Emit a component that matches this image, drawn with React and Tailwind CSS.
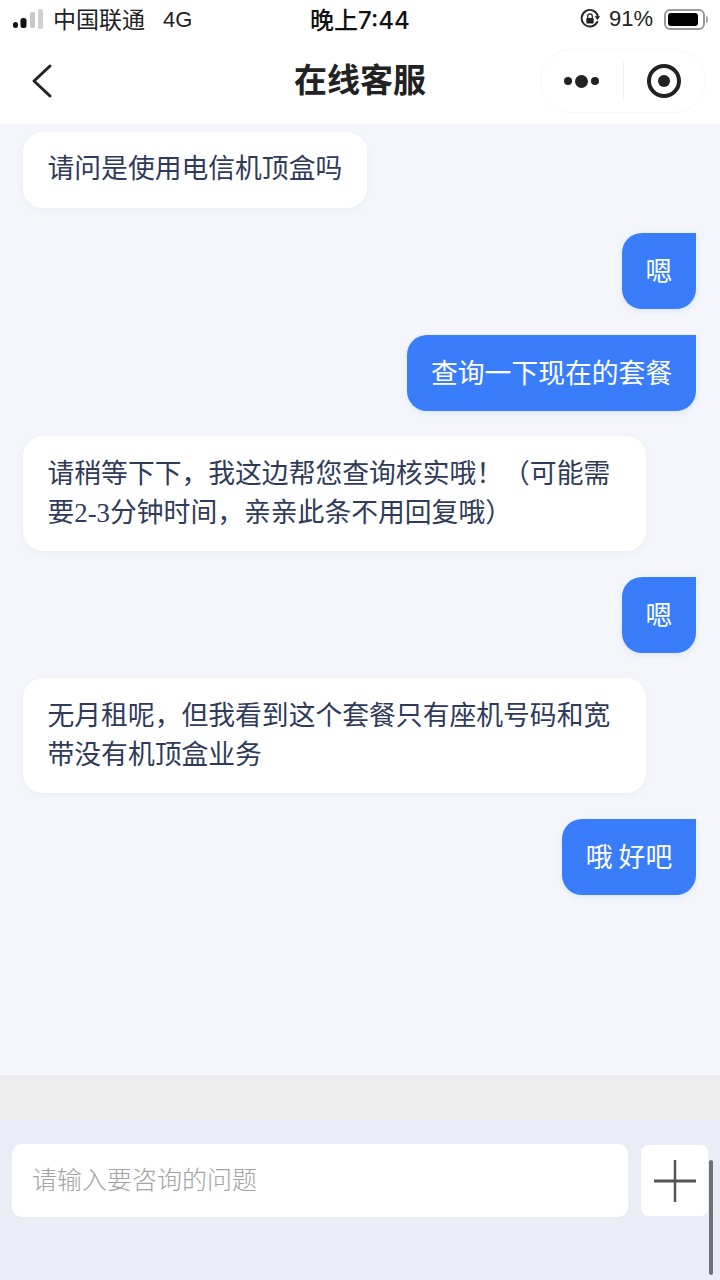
const cjk = "font-['Noto_Sans_CJK_SC','Noto_Sans',sans-serif]";

function Signal() {
  return (
    <svg width="32" height="22" viewBox="0 0 32 22">
      <rect x="0" y="14" width="5" height="6" rx="2.5" fill="#111" />
      <rect x="7.5" y="10" width="6" height="10" rx="2.5" fill="#111" />
      <rect x="17" y="4" width="5" height="16" rx="2" fill="#c8c8c8" />
      <rect x="25" y="1" width="5" height="20" rx="2" fill="#d0d0d0" />
    </svg>
  );
}

function StatusBar() {
  return (
    <div className="h-[44px] flex items-center pl-[13px] pr-[12px] pb-[6px] text-[#222]">
      <div className="flex items-center w-[297px]">
        <Signal />
        <span className="ml-[8px] -mt-[2px] text-[23px] leading-none">中国联通</span>
        <span className="ml-[18px] mt-[2px] text-[22px] leading-none font-['Liberation_Sans',sans-serif]">4G</span>
      </div>
      <div className="mt-[1px] text-[24px] leading-none font-medium text-[#111]">
        晚上<span className="font-['Inter',sans-serif]">7:44</span>
      </div>
      <div className="flex items-center ml-auto">
        <svg width="22" height="22" viewBox="0 0 24 24" fill="none">
          <path d="M20 15a9 9 0 1 1 .6-6" stroke="#222" strokeWidth="2" strokeLinecap="round" />
          <path d="M23 9l-3 4-3-4z" fill="#222" />
          <rect x="8" y="11" width="8" height="6" rx="1" fill="#222" />
          <path d="M9.5 11V9a2.5 2.5 0 0 1 5 0v2" stroke="#222" strokeWidth="1.4" />
        </svg>
        <span className="ml-[8px] text-[22px] leading-none font-['Liberation_Sans',sans-serif]">91%</span>
        <div className="ml-[11px] w-[41px] h-[21px] rounded-[6px] border-2 border-[#9a9a9a] p-[2px]">
          <div className="w-[90%] h-full rounded-[3px] bg-black" />
        </div>
        <div className="ml-[1px] w-[2px] h-[7px] rounded-r bg-[#aaa]" />
      </div>
    </div>
  );
}

function Header() {
  return (
    <div className="relative h-[80px] flex items-center pl-[30px] pr-[14px] pb-[6px] justify-between">
      <svg width="24" height="36" viewBox="0 0 24 36" fill="none">
        <path d="M20 3L4 18l16 15" stroke="#222" strokeWidth="3" strokeLinecap="round" strokeLinejoin="round" />
      </svg>
      <div className="absolute left-0 right-0 top-[18px] text-center text-[33px] leading-none font-bold text-[#222] pointer-events-none">
        在线客服
      </div>
      <div className="flex items-center w-[166px] h-[64px] rounded-full border border-[#f8f8f8]">
        <div className="flex-1 flex items-center justify-center gap-[3px]">
          <span className="w-[8px] h-[8px] rounded-full bg-[#222]" />
          <span className="w-[13px] h-[13px] rounded-full bg-[#222]" />
          <span className="w-[8px] h-[8px] rounded-full bg-[#222]" />
        </div>
        <div className="w-px h-[40px] bg-[#f0f0f0]" />
        <div className="flex-1 flex items-center justify-center">
          <div className="w-[34px] h-[34px] rounded-full border-[4px] border-[#222] flex items-center justify-center">
            <span className="w-[12px] h-[12px] rounded-full bg-[#222]" />
          </div>
        </div>
      </div>
    </div>
  );
}

function LeftBubble({ children, first }) {
  return (
    <div
      className={`self-start max-w-[623px] bg-white rounded-[20px] px-[24.5px] text-[26.8px] leading-[39px] text-[#2f3b59] font-['Liberation_Serif','Noto_Sans_CJK_SC',serif] shadow-[0_2px_6px_rgba(60,80,140,0.05)] ${
        first ? "pt-[18px] pb-[19px]" : "pt-[19px] pb-[18px]"
      }`}
    >
      {children}
    </div>
  );
}

function RightBubble({ children }) {
  return (
    <div className="self-end bg-[#3a7dfb] rounded-[20px] rounded-tr-none px-[23.8px] pt-[17px] pb-[20px] text-[26.8px] leading-[39px] text-white shadow-[0_2px_6px_rgba(60,120,250,0.12)]">
      {children}
    </div>
  );
}

function Messages() {
  return (
    <div className="h-[951px] bg-[#f4f6fb] flex flex-col gap-[25.5px] pt-[7.6px] pl-[23px] pr-[24px] overflow-hidden">
      <LeftBubble first>请问是使用电信机顶盒吗</LeftBubble>
      <RightBubble>嗯</RightBubble>
      <RightBubble>查询一下现在的套餐</RightBubble>
      <LeftBubble>请稍等下下，我这边帮您查询核实哦！（可能需要2-3分钟时间，亲亲此条不用回复哦）</LeftBubble>
      <RightBubble>嗯</RightBubble>
      <LeftBubble>无月租呢，但我看到这个套餐只有座机号码和宽带没有机顶盒业务</LeftBubble>
      <RightBubble>哦 好吧</RightBubble>
    </div>
  );
}

function InputBar() {
  return (
    <div className="relative h-[205px] bg-[#ebedf6]">
      <div className="h-[44px] bg-[#ececec]" />
      <div className="flex items-center pt-[25px] pl-[12px] pr-[12px] gap-[13px]">
        <div className="w-[616px] h-[73px] bg-white rounded-[10px] flex items-center pl-[20px] pb-[3px] text-[25px] text-[#a3a3a3] font-light">
          请输入要咨询的问题
        </div>
        <div className="w-[67px] h-[71px] bg-white rounded-[8px] flex items-center justify-center">
          <svg width="42" height="42" viewBox="0 0 42 42" fill="none">
            <path d="M21 0v42" stroke="#555" strokeWidth="2.5" />
            <path d="M0 21h42" stroke="#555" strokeWidth="3" />
          </svg>
        </div>
      </div>
      <div className="absolute right-[7px] top-[85px] w-[4px] h-[115px] rounded-full bg-[#6e6f78]" />
    </div>
  );
}

export default function App() {
  return (
    <div className={`w-[720px] h-[1280px] bg-white overflow-hidden ${cjk}`}>
      <StatusBar />
      <Header />
      <Messages />
      <InputBar />
    </div>
  );
}
